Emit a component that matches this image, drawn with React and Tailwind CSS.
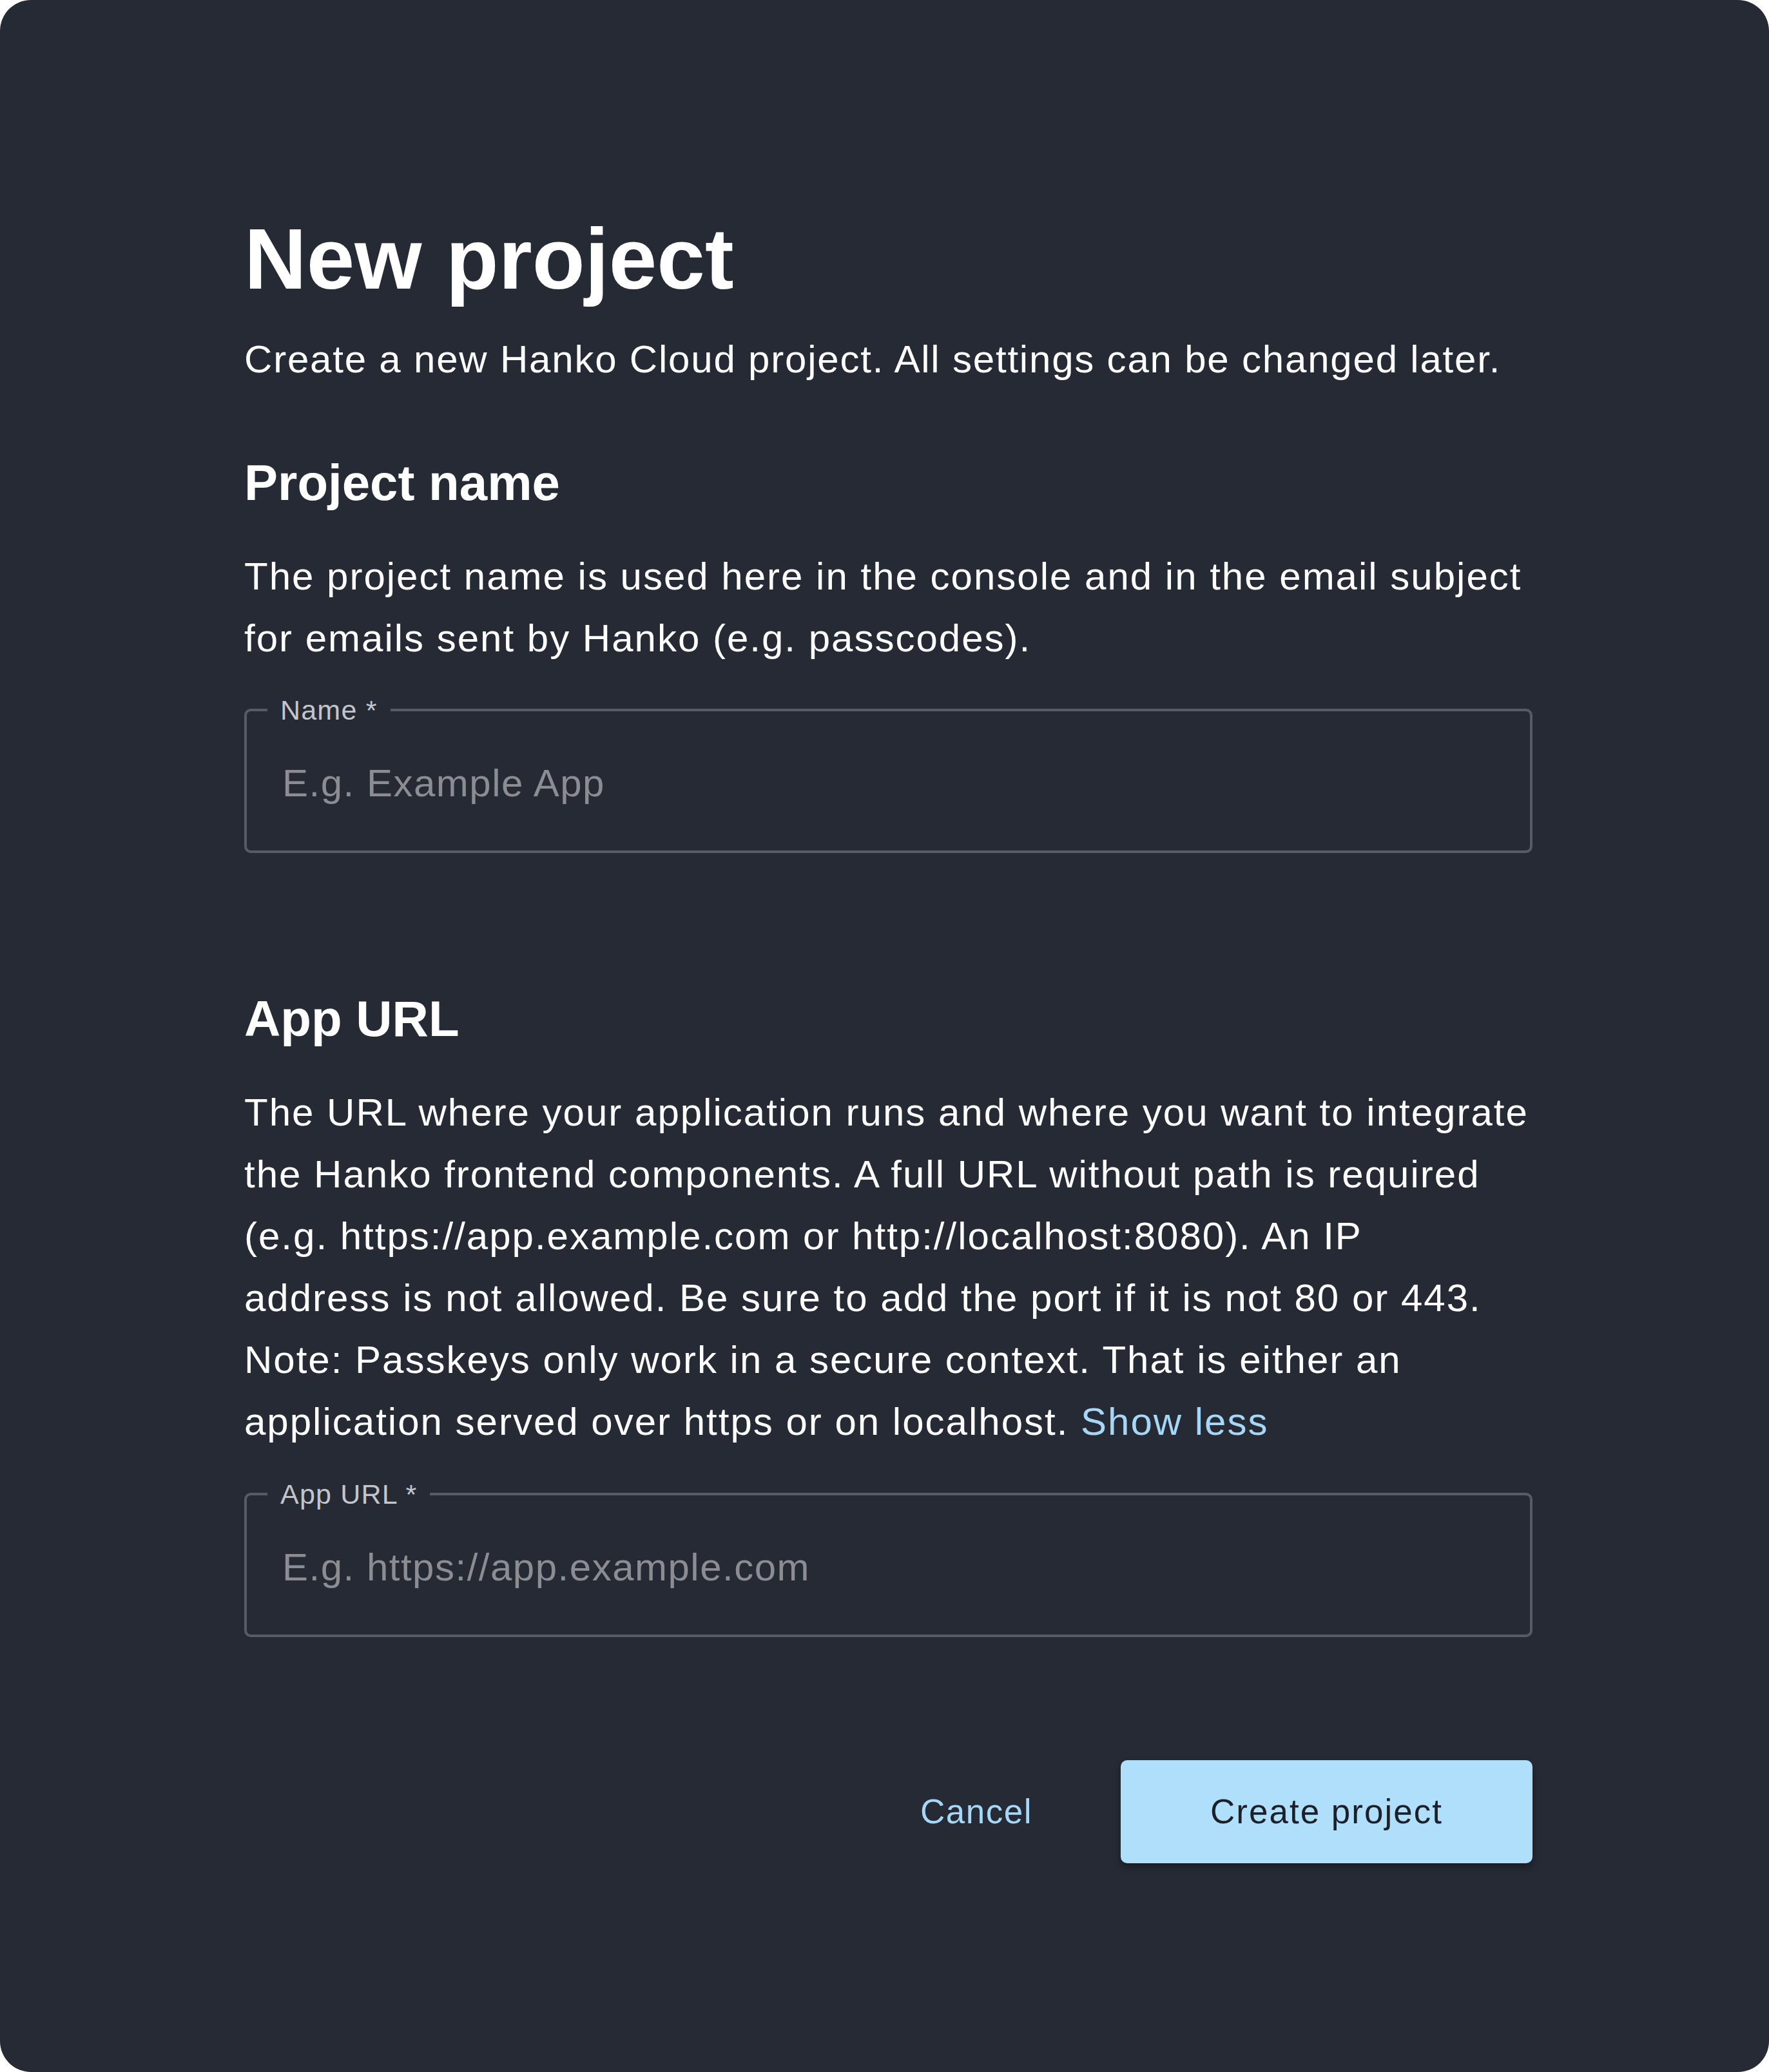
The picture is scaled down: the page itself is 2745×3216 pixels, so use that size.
import { useState } from 'react'

function OutlinedField({ label, placeholder, className }) {
  const [value, setValue] = useState('')
  return (
    <fieldset className={`rounded-[10px] border-[4px] border-[#575b66] ${className}`}>
      <legend className="ml-[32px] px-[20px] text-[43px] leading-[48px] tracking-[1.2px] text-[#c3c5ca]">
        {label} <span>*</span>
      </legend>
      <input
        type="text"
        value={value}
        onChange={e => setValue(e.target.value)}
        placeholder={placeholder}
        className="block h-[194px] w-full bg-transparent pb-[16px] pl-[55px] pr-[55px] text-[60px] tracking-[1.5px] text-white outline-none placeholder:text-[#8b8d93]"
      />
    </fieldset>
  )
}

export default function App() {
  const [expanded, setExpanded] = useState(true)

  return (
    <div className="min-h-screen bg-white">
      <div className="h-[3216px] rounded-[48px] bg-[#262a35] pl-[379px] pr-[367px] pt-[322px] font-['Liberation_Sans',Arial,sans-serif] text-white">
        <h1 className="text-[134px] font-bold leading-[160px]">New project</h1>
        <p className="mt-[28px] text-[60px] leading-[96px] tracking-[1.8px]">
          Create a new Hanko Cloud project. All settings can be changed later.
        </p>

        {/* Project name */}
        <h2 className="mt-[95px] text-[78px] font-bold leading-[96px]">Project name</h2>
        <p className="mt-[50px] text-[60px] leading-[96px] tracking-[2px]">
          The project name is used here in the console and in the email subject for emails sent by Hanko (e.g. passcodes).
        </p>
        <OutlinedField label="Name" placeholder="E.g. Example App" className="mt-[39px]" />

        {/* App URL */}
        <h2 className="mt-[209px] text-[78px] font-bold leading-[96px]">App URL</h2>
        <p className="mt-[50px] text-[60px] leading-[96px] tracking-[2px]">
          The URL where your application runs and where you want to integrate the Hanko frontend components.
          {expanded && (
            <>
              {' '}A full URL without path is required (e.g. https://app.example.com or http://localhost:8080). An IP
              <br />
              address is not allowed. Be sure to add the port if it is not 80 or 443. Note: Passkeys only work in a
              secure context. That is either an application served over https or on localhost.
            </>
          )}{' '}
          <button onClick={() => setExpanded(!expanded)} className="tracking-[2px] text-[#a6d7f6]">
            {expanded ? 'Show less' : 'Show more'}
          </button>
        </p>
        <OutlinedField label="App URL" placeholder="E.g. https://app.example.com" className="mt-[40px]" />

        {/* Actions */}
        <div className="mt-[191px] flex items-center justify-end">
          <button className="mr-[107px] h-[160px] rounded-[10px] px-[30px] text-[53px] tracking-[1.5px] text-[#a6d7f6]">
            Cancel
          </button>
          <button className="h-[160px] w-[639px] rounded-[10px] bg-[#b0dffc] text-[53px] tracking-[2px] text-[#1c2029] shadow-[0_6px_12px_rgba(0,0,0,0.35)]">
            Create project
          </button>
        </div>
      </div>
    </div>
  )
}
